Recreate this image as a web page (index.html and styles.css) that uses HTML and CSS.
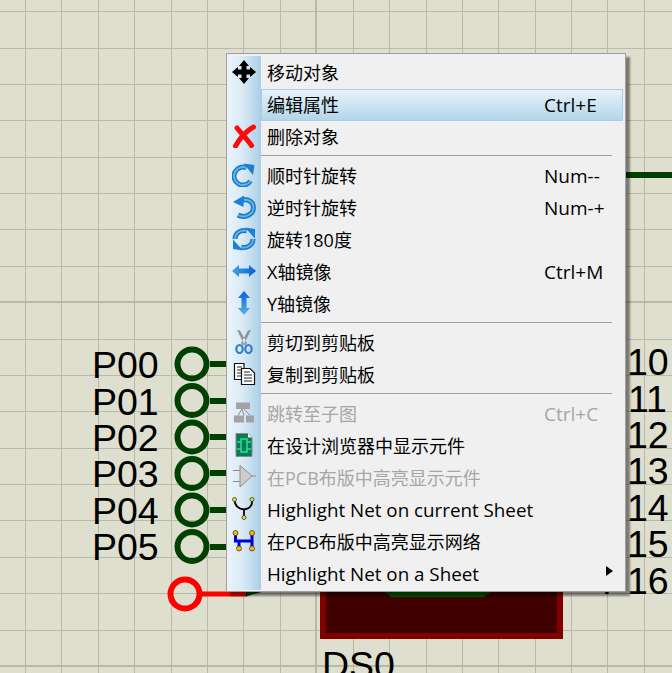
FILE: index.html
```html
<!DOCTYPE html>
<html lang="zh">
<head>
<meta charset="utf-8">
<title>Schematic context menu</title>
<link rel="stylesheet" href="styles.css">
</head>
<body>
<main class="canvas">
  <svg class="sheet" width="672" height="673" viewBox="0 0 672 673">
    <path class="grid" d="M25.5 0V673M61.5 0V673M98.5 0V673M134.5 0V673M171.5 0V673M207.5 0V673M243.5 0V673M280.5 0V673M353.5 0V673M389.5 0V673M426.5 0V673M462.5 0V673M498.5 0V673M535.5 0V673M571.5 0V673M607.5 0V673M644.5 0V673M0 11.5H672M0 48.5H672M0 84.5H672M0 120.5H672M0 157.5H672M0 193.5H672M0 229.5H672M0 266.5H672M0 339.5H672M0 375.5H672M0 411.5H672M0 448.5H672M0 484.5H672M0 520.5H672M0 557.5H672M0 593.5H672M0 630.5H672"/>
    <path class="grid-major" d="M316 0V673M0 302H672M0 666H672"/>

    <rect class="body-fill" x="323" y="480" width="237" height="156"/>
    <path class="led" d="M383 590H493L484 597H391Z"/>
    <path class="net" d="M210 364H230M210 401H230M210 437H230M210 473H230M210 510H230M210 547H230M620 175H672"/>
    <g class="pin">
      <circle cx="192" cy="364" r="14.500"/>
      <circle cx="192" cy="400.500" r="14.500"/>
      <circle cx="192" cy="437" r="14.500"/>
      <circle cx="192" cy="473.500" r="14.500"/>
      <circle cx="192" cy="510" r="14.500"/>
      <circle cx="192" cy="546.500" r="14.500"/>
    </g>
    <circle class="pin-red" cx="185" cy="594" r="14.500"/>
    <path class="net-red" d="M202 594H247"/>
    <path class="wire-green" d="M246 591H265L246 596.500Z"/>

    <g class="labels">
      <text x="92" y="378">P00</text>
      <text x="92" y="415">P01</text>
      <text x="92" y="451">P02</text>
      <text x="92" y="487">P03</text>
      <text x="92" y="524">P04</text>
      <text x="92" y="560">P05</text>
      <text x="602" y="375">P10</text>
      <text x="603" y="412">P11</text>
      <text x="602" y="448">P12</text>
      <text x="602" y="484">P13</text>
      <text x="602" y="521">P14</text>
      <text x="602" y="557">P15</text>
      <text x="602" y="594">P16</text>
      <text x="322" y="678">DS0</text>
    </g>
  </svg>

  <nav class="menu">
    <div class="row">
      <span class="ico"><svg width="24" height="24" viewBox="0 0 24 24"><path class="i-black" d="M12 0L17 6H14.500V9.500H18V7L24 12L18 17V14.500H14.500V18H17L12 24L7 18H9.500V14.500H6V17L0 12L6 7V9.500H9.500V6H7Z"/></svg></span>
      <span class="body"><span>移动对象</span></span>
    </div>
    <div class="row">
      <span class="ico"></span>
      <span class="body active"><span>编辑属性</span><span class="key">Ctrl+E</span></span>
    </div>
    <div class="row">
      <span class="ico"><svg width="24" height="24" viewBox="0 0 24 24"><path class="i-x" d="M3.500 22C8 14 14 7 21.500 3M5 4C9 9 15 15 19.500 21.500"/></svg></span>
      <span class="body"><span>删除对象</span></span>
    </div>
    <div class="sep"></div>
    <div class="row">
      <span class="ico"><svg width="24" height="24" viewBox="0 0 24 24"><path class="i-arc" d="M18.500 18A9 9 0 1 1 14.500 4.800"/><path class="i-arc-in" d="M18.500 18A9 9 0 1 1 14.500 4.800"/><path class="i-blue" d="M11.500 0.500L22.500 2L21 12Z"/></svg></span>
      <span class="body"><span>顺时针旋转</span><span class="key">Num--</span></span>
    </div>
    <div class="row">
      <span class="ico"><svg width="24" height="24" viewBox="0 0 24 24"><path class="i-arc" d="M6 20C12 23.500 21.500 20 21.500 12.500C21.500 7 16 3.500 10 5"/><path class="i-arc-in" d="M6 20C12 23.500 21.500 20 21.500 12.500C21.500 7 16 3.500 10 5"/><path class="i-blue" d="M1 7L12 0.500L11.500 12Z"/></svg></span>
      <span class="body"><span>逆时针旋转</span><span class="key">Num-+</span></span>
    </div>
    <div class="row">
      <span class="ico"><svg width="24" height="24" viewBox="0 0 24 24"><path class="i-arc" d="M3 12C3 6 9 2 15 4M21 12C21 18 15 22 9 20"/><path class="i-arc-in" d="M3 12C3 6 9 2 15 4M21 12C21 18 15 22 9 20"/><path class="i-blue" d="M13 0.500L23 2V11.500ZM11 23.500L1 22V12.500Z"/></svg></span>
      <span class="body"><span>旋转180度</span></span>
    </div>
    <div class="row">
      <span class="ico"><svg width="24" height="24" viewBox="0 0 24 24"><defs><linearGradient id="flipH"><stop offset="0" stop-color="#3fa6e2"/><stop offset="1" stop-color="#0b5fd8"/></linearGradient></defs><path fill="url(#flipH)" d="M0 12L7 6V9.500H17V6L24 12L17 18V14.500H7V18Z"/></svg></span>
      <span class="body"><span>X轴镜像</span><span class="key">Ctrl+M</span></span>
    </div>
    <div class="row">
      <span class="ico"><svg width="24" height="24" viewBox="0 0 24 24"><defs><linearGradient id="flipV" x2="0" y2="1"><stop offset="0" stop-color="#0b5fd8"/><stop offset="1" stop-color="#5ab4e8"/></linearGradient></defs><path fill="url(#flipV)" d="M12 0L18 7H14.500V17H18L12 24L6 17H9.500V7H6Z"/></svg></span>
      <span class="body"><span>Y轴镜像</span></span>
    </div>
    <div class="sep"></div>
    <div class="row">
      <span class="ico"><svg width="24" height="24" viewBox="0 0 24 24"><path class="i-grey-blade" d="M5 0L8 0.500L15 13L13 16ZM19 0L16 0.500L9 13L11 16Z"/><ellipse class="i-handle" cx="7.500" cy="19" rx="3.200" ry="4"/><ellipse class="i-handle" cx="16.500" cy="19" rx="3.200" ry="4"/></svg></span>
      <span class="body"><span>剪切到剪贴板</span></span>
    </div>
    <div class="row">
      <span class="ico"><svg width="24" height="24" viewBox="0 0 24 24"><path class="i-doc" d="M2.500 1.500H12V17.500H2.500Z"/><path class="i-doc" d="M9.500 6.500H18L22.500 11V22.500H9.500Z"/><path class="i-lines" d="M5 5H10M5 8H9M5 11H9M5 14H9M12 10H18M12 13H20M12 16H20M12 19H20"/></svg></span>
      <span class="body"><span>复制到剪贴板</span></span>
    </div>
    <div class="sep"></div>
    <div class="row off">
      <span class="ico"><svg width="24" height="24" viewBox="0 0 24 24"><path class="i-grey" d="M4 1.500H18V8H4ZM2 14.500H12V21.500H2ZM14 14.500H22V21.500H14Z"/><path class="i-grey-line" d="M10 8L6 14.500M12 8L18 14.500M10 8L12 14.500"/></svg></span>
      <span class="body"><span>跳转至子图</span><span class="key">Ctrl+C</span></span>
    </div>
    <div class="row">
      <span class="ico"><svg width="24" height="24" viewBox="0 0 24 24"><path class="i-board" d="M4 0.500H16L20 4.500V23.500H4Z"/><path class="i-fold" d="M16 0.500L20 4.500H16Z"/><path class="i-trace" d="M5 9H9M5 16H9M15 9H19M15 16H19M9 6H15V19H9Z"/></svg></span>
      <span class="body"><span>在设计浏览器中显示元件</span></span>
    </div>
    <div class="row off">
      <span class="ico"><svg width="24" height="24" viewBox="0 0 24 24"><path class="i-buffer" d="M8 0.500L20 11L8 22Z"/><path class="i-grey-line" d="M1 5.500H8M1 16.500H8M20 11H24"/></svg></span>
      <span class="body"><span>在PCB布版中高亮显示元件</span></span>
    </div>
    <div class="row">
      <span class="ico"><svg width="24" height="24" viewBox="0 0 24 24"><path class="i-curve" d="M2.500 3C3 10 8 12 12 12.500C16 12 21 10 20 3M12 12.500V20"/><circle class="i-node" cx="2.500" cy="2.500" r="2"/><circle class="i-node" cx="20" cy="2.500" r="2"/><circle class="i-node" cx="12" cy="20.500" r="2"/></svg></span>
      <span class="body"><span class="lat">Highlight Net on current Sheet</span></span>
    </div>
    <div class="row">
      <span class="ico"><svg width="24" height="24" viewBox="0 0 24 24"><path class="i-h" d="M3.500 4V12H20M20 4V20M7 12V20"/><circle class="i-node-o" cx="3.500" cy="4" r="2.500"/><circle class="i-node-o" cx="20" cy="4" r="2.500"/><circle class="i-node-o" cx="7" cy="19.500" r="2.500"/><circle class="i-node-o" cx="20" cy="19.500" r="2.500"/></svg></span>
      <span class="body"><span>在PCB布版中高亮显示网络</span></span>
    </div>
    <div class="row">
      <span class="ico"></span>
      <span class="body"><span class="lat">Highlight Net on a Sheet</span><svg class="caret" width="7" height="10" viewBox="0 0 7 10"><path d="M0 0L7 5L0 10Z"/></svg></span>
    </div>
  </nav>
</main>
</body>
</html>
```
FILE: styles.css
```css
html, body {
  margin: 0;
  padding: 0;
  width: 672px;
  height: 673px;
  overflow: hidden;
  background: #dfdfcf;
}

.canvas {
  position: relative;
  width: 672px;
  height: 673px;
  overflow: hidden;
}

.sheet {
  display: block;
}

.grid {
  fill: none;
  stroke: #b9b9a9;
  stroke-width: 1;
}

.grid-major {
  fill: none;
  stroke: #b9b9a9;
  stroke-width: 2;
}

.body-fill {
  fill: #400000;
  stroke: #800000;
  stroke-width: 6;
}

.led {
  fill: #005c00;
}

.net {
  fill: none;
  stroke: #004000;
  stroke-width: 6;
}

.pin circle {
  fill: none;
  stroke: #004000;
  stroke-width: 6;
}

.pin-red {
  fill: none;
  stroke: #ff0000;
  stroke-width: 6;
}

.net-red {
  fill: none;
  stroke: #ff0000;
  stroke-width: 5;
}

.wire-green {
  fill: #004000;
}

.labels text {
  font-family: "Liberation Sans", Arial, sans-serif;
  font-size: 37.500px;
  fill: #000;
}

/* menu */
.menu {
  position: absolute;
  left: 226px;
  top: 53px;
  width: 400px;
  height: 539px;
  box-sizing: border-box;
  padding: 3px 2px 1px 0;
  display: flex;
  flex-direction: column;
  border: 1px solid #a0a0a0;
  background:
    linear-gradient(90deg, #e9f3fb 0%, #d9e9f5 45%, #a9cfe6 100%) 1px 2px / 33px 534px no-repeat,
    #f0f0f0;
  box-shadow: 4px 4px 2px rgba(0, 0, 0, 0.45);
  font-family: "Open Sans", "Noto Sans CJK SC", sans-serif;
  font-size: 18px;
  color: #000;
}

.row {
  display: flex;
  flex: 0 0 32px;
  height: 32px;
}

.row.off {
  color: #a6a6a6;
}

.ico {
  flex: 0 0 34px;
  display: flex;
  align-items: center;
  justify-content: center;
  box-sizing: border-box;
}

.ico svg {
  display: block;
  margin-top: -3px;
}

.body {
  flex: 1;
  display: flex;
  align-items: center;
  justify-content: space-between;
  box-sizing: border-box;
  padding: 0 0 0 5px;
  border: 1px solid transparent;
  line-height: 28px;
  white-space: nowrap;
}

.body.active {
  background: linear-gradient(180deg, #e6f2fa 0%, #cfe4f3 50%, #b2d5e9 100%);
  border-color: #a9cde2;
}

.lat {
  font-size: 18.800px;
}

.key {
  flex: 0 0 78px;
  font-size: 19px;
}

.caret {
  display: block;
  align-self: flex-start;
  margin: 7px 9px 0 0;
}

.caret path {
  fill: #000;
}

.sep {
  flex: 0 0 1px;
  height: 1px;
  margin: 2px 11px 4px 34px;
  background: #a0a0a0;
}

/* icons */
.i-black { fill: #000; }
.i-x {
  fill: none;
  stroke: #ff0a0a;
  stroke-width: 5;
  stroke-linecap: round;
}
.i-arc {
  fill: none;
  stroke: #1a78c8;
  stroke-width: 5;
}
.i-arc-in {
  fill: none;
  stroke: #5fb2e8;
  stroke-width: 2;
}
.i-blue { fill: #1c7fd6; }
.i-grey-blade {
  fill: #8d949c;
}
.i-handle {
  fill: none;
  stroke: #2e7fd0;
  stroke-width: 2.200;
}
.i-doc {
  fill: #fff;
  stroke: #111;
  stroke-width: 1.200;
}
.i-lines {
  fill: none;
  stroke: #222;
  stroke-width: 1;
}
.i-grey { fill: #a3a3a3; }
.i-grey-line {
  fill: none;
  stroke: #8d8d8d;
  stroke-width: 1;
}
.i-board {
  fill: #0b7a50;
  stroke: #7f8f8a;
  stroke-width: 1;
}
.i-fold { fill: #fff; }
.i-trace {
  fill: none;
  stroke: #27e0a0;
  stroke-width: 1.500;
}
.i-buffer {
  fill: #cdcdcd;
  stroke: #8d8d8d;
  stroke-width: 1;
}
.i-curve {
  fill: none;
  stroke: #000;
  stroke-width: 1.800;
}
.i-node {
  fill: #f8e020;
  stroke: #333;
  stroke-width: 0.800;
}
.i-h {
  fill: none;
  stroke: #0000d8;
  stroke-width: 3;
}
.i-node-o {
  fill: #f2b820;
  stroke: #554000;
  stroke-width: 0.800;
}
```
